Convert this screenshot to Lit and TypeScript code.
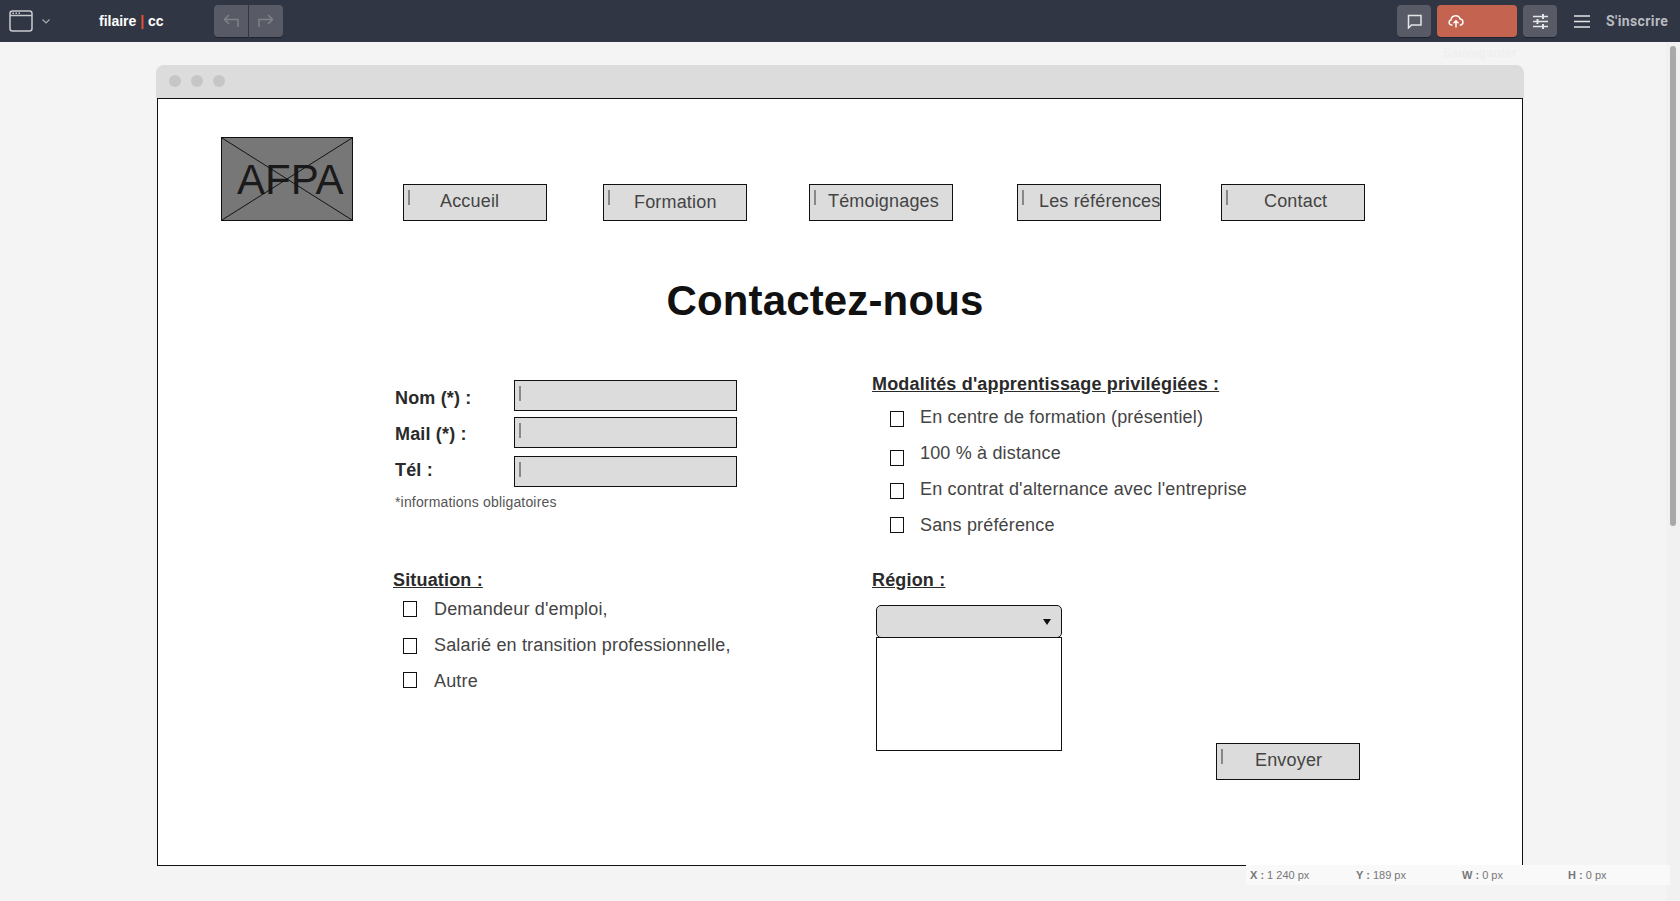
import { LitElement, html, css, svg } from 'lit';
import { customElement } from 'lit/decorators.js';

// top left corner of the artboard content, in page pixels
const OX = 158;
const OY = 99;

const place = (x: number, y: number, w?: number, h?: number) =>
  `left:${x - OX}px;top:${y - OY}px;` +
  (w !== undefined ? `width:${w}px;` : '') +
  (h !== undefined ? `height:${h}px;` : '');

const NAV = [
  { label: 'Accueil', x: 403, tx: 440, ty: 201 },
  { label: 'Formation', x: 603, tx: 634, ty: 202 },
  { label: 'Témoignages', x: 809, tx: 828, ty: 201 },
  { label: 'Les références', x: 1017, tx: 1039, ty: 201 },
  { label: 'Contact', x: 1221, tx: 1264, ty: 201 },
];

const LABELS = [
  { text: 'Nom (*) :', y: 398 },
  { text: 'Mail (*) :', y: 434 },
  { text: 'Tél :', y: 470 },
];

const INPUTS = [380, 417, 456];

const CHECKS = [
  { text: 'Demandeur d\'emploi,', bx: 403, by: 601, tx: 434, ty: 609 },
  { text: 'Salarié en transition professionnelle,', bx: 403, by: 638, tx: 434, ty: 645 },
  { text: 'Autre', bx: 403, by: 672, tx: 434, ty: 681 },
  { text: 'En centre de formation (présentiel)', bx: 890, by: 411, tx: 920, ty: 417 },
  { text: '100 % à distance', bx: 890, by: 450, tx: 920, ty: 453 },
  { text: 'En contrat d\'alternance avec l\'entreprise', bx: 890, by: 483, tx: 920, ty: 489 },
  { text: 'Sans préférence', bx: 890, by: 517, tx: 920, ty: 525 },
];

const HEADINGS = [
  { text: 'Modalités d\'apprentissage privilégiées :', x: 872, y: 384 },
  { text: 'Situation :', x: 393, y: 580 },
  { text: 'Région :', x: 872, y: 580 },
];

@customElement('app-root')
export class AppRoot extends LitElement {
  static styles = css`
    :host {
      display: flex;
      flex-direction: column;
      height: 901px;
      overflow: hidden;
      position: relative;
      background: #f4f4f4;
      font-family: "Liberation Sans", Arial, sans-serif;
    }

    .toolbar {
      flex: none;
      height: 42px;
      display: flex;
      align-items: center;
      background: #303644;
      padding-left: 9px;
    }
    .toolbar svg { display: block; fill: none; }
    .window-icon { margin-right: 9px; }
    .brand {
      margin-left: 49px;
      width: 115px;
      color: #fff;
      font-size: 14px;
      font-weight: 700;
    }
    .brand i { color: #e8503a; font-style: normal; }
    .history { display: flex; gap: 1px; }
    .tool {
      width: 34px;
      height: 32px;
      display: flex;
      align-items: center;
      justify-content: center;
      background: #585b66;
      border-radius: 4px;
      box-shadow: 0 1px 0 #1f2430;
    }
    .history .tool:first-child { border-radius: 4px 0 0 4px; }
    .history .tool:last-child { border-radius: 0 4px 4px 0; }
    .right { margin-left: auto; display: flex; align-items: center; }
    .right .tool { margin-right: 6px; }
    .tool.save {
      width: 80px;
      justify-content: flex-start;
      padding-left: 11px;
      box-sizing: border-box;
      background: #c4634f;
    }
    .menu { margin-left: 11px; margin-right: 16px; }
    .signup {
      width: 62px;
      color: #b9bbc0;
      font-size: 14px;
      font-weight: 700;
      font-family: Roboto, sans-serif;
      letter-spacing: 0.4px;
      white-space: nowrap;
      margin-right: 12px;
    }
    .ghost {
      position: absolute;
      left: 1443px;
      top: 46px;
      font-size: 12px;
      font-weight: 700;
      letter-spacing: 0.1px;
      color: #efefef;
    }

    .body { flex: 1; display: flex; min-height: 0; }
    .workspace { flex: 1; padding: 23px 0 0 156px; }
    .scrollbar { flex: none; width: 14px; background: #f1f1f1; padding: 4px 4px 0 4px; box-sizing: border-box; }
    .thumb { width: 6px; height: 480px; background: #a8a8a8; border-radius: 3px; }

    .window { width: 1368px; }
    .chrome {
      height: 33px;
      background: #dcdcdc;
      border-radius: 8px 8px 0 0;
      display: flex;
      align-items: center;
      gap: 10px;
      padding: 0 0 1px 13px;
      box-sizing: border-box;
    }
    .chrome span { width: 12px; height: 12px; border-radius: 50%; background: #c6c6c6; }
    .canvas {
      position: relative;
      height: 766px;
      background: #fff;
      border: 1px solid #111;
      margin: 0 1px;
      color: #444;
      font-size: 18px;
      letter-spacing: 0.17px;
    }
    .canvas > * { position: absolute; white-space: nowrap; }

    .logo { background: #777; border: 1px solid #111; box-sizing: border-box; }
    .logo svg { position: absolute; inset: 0; width: 100%; height: 100%; }
    .logo-text {
      position: absolute;
      left: 15px;
      top: 18px;
      color: #1a1a1a;
      font-size: 42px;
      line-height: 48px;
      letter-spacing: 0;
    }
    .box { background: #dcdcdc; border: 1px solid #111; box-sizing: border-box; }
    .box::before {
      content: "";
      position: absolute;
      left: 4px;
      top: 5px;
      width: 2px;
      height: 15px;
      background: #888;
    }
    .text { line-height: 20px; transform: translateY(-10px); }
    .title {
      color: #111;
      font-size: 42px;
      font-weight: 700;
      line-height: 50px;
      letter-spacing: 0.15px;
      transform: translate(-50%, -25px);
    }
    .label { color: #2a2a2a; font-weight: 700; }
    .heading { color: #2a2a2a; font-weight: 700; text-decoration: underline; }
    .note { font-size: 14px; color: #555; }
    .check { width: 14px; height: 16px; border: 1.5px solid #111; box-sizing: border-box; }
    .select {
      background: #dcdcdc;
      border: 1px solid #111;
      border-radius: 5px;
      box-sizing: border-box;
    }
    .arrow {
      position: absolute;
      right: 10px;
      top: 13px;
      width: 0;
      height: 0;
      border-left: 4px solid transparent;
      border-right: 4px solid transparent;
      border-top: 6px solid #111;
    }
    .list { background: #fff; border: 1px solid #111; box-sizing: border-box; }

    .status {
      position: absolute;
      left: 1246px;
      top: 865px;
      width: 424px;
      height: 20px;
      display: grid;
      grid-template-columns: repeat(4, 106px);
      align-items: center;
      padding-left: 4px;
      box-sizing: border-box;
      background: #f9f9f9;
      color: #777;
      font-size: 11px;
    }
  `;

  private button(label: string, x: number, y: number, tx: number, ty: number) {
    return html`
      <div class="box" style=${place(x, y, 144, 37)}></div>
      <div class="text" style=${place(tx, ty)}>${label}</div>
    `;
  }

  private icon(w: number, h: number, stroke: string, body: unknown, cls = '') {
    return html`<svg class=${cls} width=${w} height=${h} viewBox="0 0 ${w} ${h}" stroke=${stroke} stroke-width="1.5">${body}</svg>`;
  }

  render() {
    return html`
      <div class="toolbar">
        ${this.icon(24, 22, '#c9cacd', svg`
          <rect x="1" y="1" width="22" height="20" rx="2.5"/>
          <path d="M1 5.5h22"/>
          <path d="M3.5 3.2h1.5M6.5 3.2h1.5M9.5 3.2h1.5" stroke-width="1.6"/>
        `, 'window-icon')}
        ${this.icon(8, 5, '#a9abb1', svg`<path d="M.5.5 4 4 7.5.5" stroke-width="1.2"/>`)}
        <div class="brand">filaire <i>|</i> cc</div>
        <div class="history">
          <div class="tool">${this.icon(16, 14, '#7f8188', svg`<path d="M15 13V5.5H1.5M6 1 1.5 5.5 6 10"/>`)}</div>
          <div class="tool">${this.icon(16, 14, '#7f8188', svg`<path d="M1 13V5.5h13.5M10 1l4.5 4.5L10 10"/>`)}</div>
        </div>
        <div class="right">
          <div class="tool">${this.icon(15, 15, '#e4e5e7', svg`<path d="M1.5 1.5h12.5v9.5H4.5l-3 3z"/>`)}</div>
          <div class="tool save">${this.icon(16, 14, '#fff', svg`<path d="M4.5 11H3.5a2.7 2.7 0 0 1-.4-5.3 4.6 4.6 0 0 1 9-.6 3 3 0 0 1 .6 5.9h-1M8 13.5V7M5.5 9.2 8 6.7l2.5 2.5"/>`)}</div>
          <div class="tool">${this.icon(15, 15, '#e4e5e7', svg`<path d="M0 2.5h15M0 7.5h15M0 12.5h15"/><path d="M10 0v5M4.5 5v5M10 10v5" stroke-width="2"/>`)}</div>
          ${this.icon(16, 13, '#e4e5e7', svg`<path d="M0 1h16M0 6.5h16M0 12h16"/>`, 'menu')}
          <div class="signup">S'inscrire</div>
        </div>
      </div>
      <div class="ghost">Sauvegarder</div>

      <div class="body">
        <div class="workspace">
          <div class="window">
            <div class="chrome"><span></span><span></span><span></span></div>
            <div class="canvas">
              <div class="logo" style=${place(221, 137, 132, 84)}>
                <div class="logo-text">AFPA</div>
                <svg viewBox="0 0 132 84" preserveAspectRatio="none">
                  <path d="M0 0 132 84M132 0 0 84" stroke="#111" fill="none"/>
                </svg>
              </div>
              ${NAV.map((n) => this.button(n.label, n.x, 184, n.tx, n.ty))}
              <div class="title" style=${place(825, 301)}>Contactez-nous</div>

              ${LABELS.map((l) => html`<div class="text label" style=${place(395, l.y)}>${l.text}</div>`)}
              ${INPUTS.map((y) => html`<div class="box" style=${place(514, y, 223, 31)}></div>`)}
              <div class="text note" style=${place(395, 502)}>*informations obligatoires</div>

              ${HEADINGS.map((h) => html`<div class="text heading" style=${place(h.x, h.y)}>${h.text}</div>`)}
              ${CHECKS.map((c) => html`
                <div class="check" style=${place(c.bx, c.by)}></div>
                <div class="text" style=${place(c.tx, c.ty)}>${c.text}</div>
              `)}

              <div class="select" style=${place(876, 605, 186, 33)}><span class="arrow"></span></div>
              <div class="list" style=${place(876, 637, 186, 114)}></div>
              ${this.button('Envoyer', 1216, 743, 1255, 760)}
            </div>
          </div>
        </div>
        <div class="scrollbar"><div class="thumb"></div></div>
      </div>

      <div class="status">
        <span><b>X :</b> 1 240 px</span>
        <span><b>Y :</b> 189 px</span>
        <span><b>W :</b> 0 px</span>
        <span><b>H :</b> 0 px</span>
      </div>
    `;
  }
}
